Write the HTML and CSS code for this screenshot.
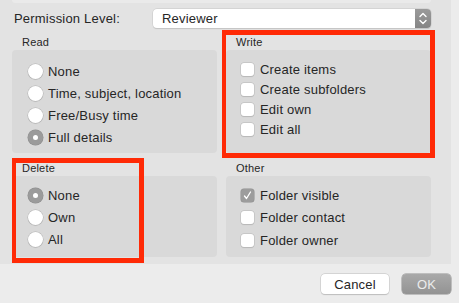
FILE: index.html
```html
<!DOCTYPE html>
<html lang="en">
<head>
    <meta charset="UTF-8">
    <meta name="viewport" content="width=device-width, initial-scale=1.0">
    <title>Permissions</title>
    <link rel="stylesheet" href="styles.css">
</head>
<body>
    <div class="sheet">
        <div class="lip"></div>

        <div class="level-row">
            <span class="level-label">Permission Level:</span>
            <div class="select">
                <span class="select-value">Reviewer</span>
                <span class="stepper">
                    <svg width="16" height="19" viewBox="0 0 16 19">
                        <path d="M5 7.5 L8 4.5 L11 7.5" fill="none" stroke="#fff" stroke-width="1.4" stroke-linecap="round" stroke-linejoin="round"/>
                        <path d="M5 11.5 L8 14.5 L11 11.5" fill="none" stroke="#fff" stroke-width="1.4" stroke-linecap="round" stroke-linejoin="round"/>
                    </svg>
                </span>
            </div>
        </div>

        <div class="groups">
            <section class="group">
                <h3>Read</h3>
                <div class="box box-read">
                    <div class="option"><span class="radio"></span>None</div>
                    <div class="option"><span class="radio"></span>Time, subject, location</div>
                    <div class="option"><span class="radio"></span>Free/Busy time</div>
                    <div class="option"><span class="radio checked"></span>Full details</div>
                </div>
            </section>

            <section class="group">
                <h3>Write</h3>
                <div class="box box-write">
                    <div class="option"><span class="check"></span>Create items</div>
                    <div class="option"><span class="check"></span>Create subfolders</div>
                    <div class="option"><span class="check"></span>Edit own</div>
                    <div class="option"><span class="check"></span>Edit all</div>
                </div>
            </section>

            <section class="group">
                <h3>Delete</h3>
                <div class="box box-delete">
                    <div class="option"><span class="radio checked"></span>None</div>
                    <div class="option"><span class="radio"></span>Own</div>
                    <div class="option"><span class="radio"></span>All</div>
                </div>
            </section>

            <section class="group">
                <h3>Other</h3>
                <div class="box box-other">
                    <div class="option first">
                        <span class="check checked">
                            <svg width="13" height="13" viewBox="0 0 13 13">
                                <path d="M3.5 7 L5.5 9.5 L9.5 3" fill="none" stroke="#fff" stroke-width="1.3" stroke-linecap="round" stroke-linejoin="round"/>
                            </svg>
                        </span>Folder visible
                    </div>
                    <div class="option tall"><span class="check"></span>Folder contact</div>
                    <div class="option"><span class="check"></span>Folder owner</div>
                </div>
            </section>
        </div>
    </div>

    <div class="actions">
        <button class="btn">Cancel</button>
        <button class="btn btn-ok">OK</button>
    </div>

    <!-- red annotation frames -->
    <div class="mark mark-write"></div>
    <div class="mark mark-delete"></div>
</body>
</html>
```

FILE: styles.css
```css
* {
    box-sizing: border-box;
}

body {
    margin: 0;
    background: #ececec;
    font-family: "Liberation Sans", Arial, sans-serif;
    font-size: 13px;
    letter-spacing: 0.2px;
    color: #262626;
    position: relative;
    width: 459px;
    height: 303px;
    overflow: hidden;
}

.sheet {
    width: 451px;
    background: #e3e3e3;
    padding: 0 20px 7px 12px;
}

.lip {
    height: 3px;
    background: #eaeaea;
    border-radius: 0 0 3px 3px;
}

.level-row {
    display: flex;
    align-items: center;
    height: 19px;
    margin-top: 6px;
}

.level-label {
    width: 141px;
    padding-left: 2px;
}

.select {
    width: 278px;
    height: 19px;
    display: flex;
    align-items: center;
    background: #fff;
    border-radius: 4px;
    box-shadow: 0 0 0 0.5px #c8c8c8, 0 0.5px 1px rgba(0, 0, 0, 0.15);
}

.select-value {
    flex: 1;
    padding-left: 9px;
}

.stepper {
    width: 16px;
    height: 19px;
    background: linear-gradient(#9a9a9a, #858585);
    border-radius: 0 4px 4px 0;
    display: flex;
}

.groups {
    display: grid;
    grid-template-columns: 205px 205px;
    column-gap: 9px;
    row-gap: 8px;
    margin-top: 7px;
}

.group h3 {
    margin: 0;
    font-size: 11px;
    font-weight: normal;
    line-height: 15px;
    padding-left: 10px;
}

.box {
    background: #d9d9d9;
    border-radius: 4px;
}

.box-read {
    padding: 10px 0 5px 16px;
}

.box-write {
    padding: 9px 0 14px 15px;
}

.box-delete {
    padding: 8px 0 7px 16px;
}

.box-other {
    padding: 9px 0 6px 15px;
}

.option {
    display: flex;
    align-items: center;
    gap: 5px;
    height: 22px;
}

.box-write .option {
    height: 20px;
}

.box-other .option.first {
    height: 21px;
}

.box-other .option.tall {
    height: 23px;
}

.radio {
    width: 15px;
    height: 15px;
    border-radius: 50%;
    background: #fff;
    box-shadow: 0 0 0 0.5px #b4b4b4, 0 0.5px 1px rgba(0, 0, 0, 0.2);
    display: flex;
    align-items: center;
    justify-content: center;
}

.radio.checked {
    background: #9b9b9b;
    box-shadow: 0 0 0 0.5px #8e8e8e;
}

.radio.checked::after {
    content: "";
    width: 5px;
    height: 5px;
    border-radius: 50%;
    background: #fff;
}

.check {
    width: 13px;
    height: 13px;
    border-radius: 3px;
    background: #fff;
    box-shadow: 0 0 0 0.5px #b8b8b8, 0 0.5px 1px rgba(0, 0, 0, 0.15);
    margin-right: 1px;
    display: flex;
}

.check.checked {
    background: #9c9c9c;
    box-shadow: 0 0 0 0.5px #8e8e8e;
}

.actions {
    display: flex;
    justify-content: flex-end;
    gap: 13px;
    margin-top: 10px;
    padding-right: 8px;
}

.btn {
    height: 20px;
    width: 68px;
    padding: 0;
    font-family: inherit;
    font-size: 13px;
    letter-spacing: 0.2px;
    color: #262626;
    background: #fff;
    border: none;
    border-radius: 4px;
    box-shadow: 0 0 0 0.5px #c2c2c2, 0 0.5px 1px rgba(0, 0, 0, 0.2);
}

.btn-ok {
    width: 49px;
    color: #ececec;
    background: linear-gradient(#a9a9a9, #939393);
    box-shadow: 0 0 0 0.5px #909090;
}

.mark {
    position: absolute;
    border: 5px solid #ff2a06;
}

.mark-write {
    left: 222px;
    top: 30px;
    width: 213px;
    height: 128px;
    border-left-width: 4px;
}

.mark-delete {
    left: 12px;
    top: 158px;
    width: 132px;
    height: 105px;
    border-left-width: 4px;
}
```
